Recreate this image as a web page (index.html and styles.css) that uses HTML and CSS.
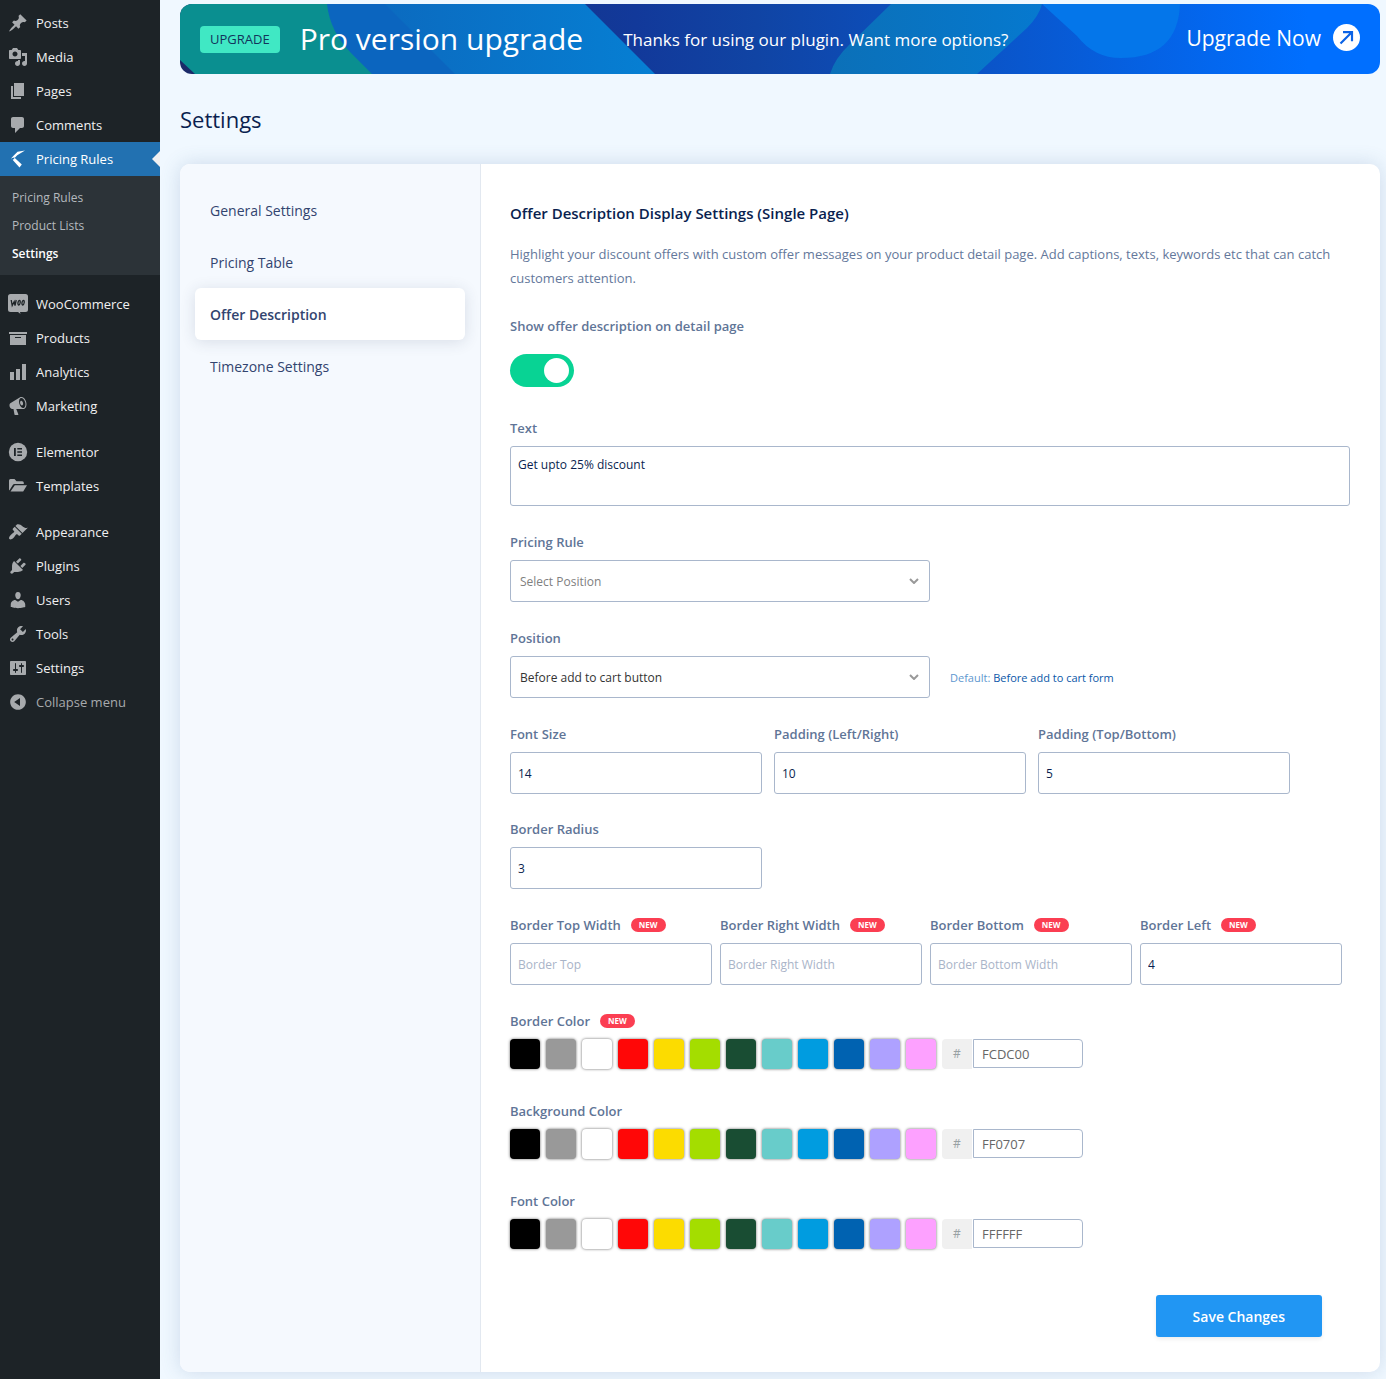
FILE: index.html
```html
<!DOCTYPE html>
<html lang="en">
<head>
<meta charset="utf-8">
<title>Settings</title>
<link rel="stylesheet" href="styles.css">
</head>
<body>
<div class="layout">
  <nav class="menu" aria-label="Main menu">
    <ul class="menu-group">
      <li><a class="menu-link" href="#"><svg class="icon" viewBox="0 0 20 20"><path d="M10.44 3.02l1.82-1.82 6.36 6.35-1.83 1.82c-1.05-.68-2.48-.57-3.41.36l-.75.75c-.92.93-1.04 2.35-.35 3.41l-1.83 1.82-2.41-2.41-2.8 2.79c-.42.42-3.38 2.71-3.8 2.29s1.86-3.39 2.28-3.81l2.79-2.79L4.1 9.36l1.83-1.82c1.05.69 2.48.57 3.4-.36l.75-.75c.93-.92 1.05-2.35.36-3.41z"/></svg>Posts</a></li>
      <li><a class="menu-link" href="#"><svg class="icon" viewBox="0 0 20 20"><path d="M13 11V4c0-.55-.45-1-1-1h-1.67L9 1H5L3.67 3H2c-.55 0-1 .45-1 1v7c0 .55.45 1 1 1h10c.55 0 1-.45 1-1zM7 4.5c1.38 0 2.5 1.12 2.5 2.5S8.38 9.5 7 9.5 4.5 8.38 4.5 7 5.62 4.5 7 4.5zM14 6h5v10.5c0 1.38-1.12 2.5-2.5 2.5S14 17.88 14 16.5s1.12-2.5 2.5-2.5c.17 0 .34.02.5.05V9h-3V6zm-4 8.05V13h2v3.5c0 1.38-1.12 2.5-2.5 2.5S7 17.88 7 16.5 8.12 14 9.5 14c.17 0 .34.02.5.05z"/></svg>Media</a></li>
      <li><a class="menu-link" href="#"><svg class="icon" viewBox="0 0 20 20"><path d="M6 15V2h10v13H6zm-1 1h8v2H3V5h2v11z"/></svg>Pages</a></li>
      <li><a class="menu-link" href="#"><svg class="icon" viewBox="0 0 20 20"><path d="M5 2h9c1.1 0 2 .9 2 2v7c0 1.1-.9 2-2 2h-2l-5 5v-5H5c-1.1 0-2-.9-2-2V4c0-1.1.9-2 2-2z"/></svg>Comments</a></li>
      <li>
        <a class="menu-link menu-link-current" href="#"><svg class="icon" viewBox="0 0 20 20"><path d="M17 1.500L9.500 2.800 6 6.200 3 9.500 4.800 11 9.200 6.200zM3.200 9.200L6.300 8.600 13.800 15.500 11.500 18.500z"/></svg>Pricing Rules</a>
        <ul class="submenu">
          <li><a class="submenu-link" href="#">Pricing Rules</a></li>
          <li><a class="submenu-link" href="#">Product Lists</a></li>
          <li><a class="submenu-link submenu-link-current" href="#">Settings</a></li>
        </ul>
      </li>
    </ul>
    <ul class="menu-group">
      <li><a class="menu-link" href="#"><svg class="icon" viewBox="0 0 20 20"><path d="M2.500 0h15A2.500 2.500 0 0 1 20 2.500v13a2.500 2.500 0 0 1-2.500 2.500H12l.5 2-2.500-2H2.500A2.500 2.500 0 0 1 0 15.500v-13A2.500 2.500 0 0 1 2.500 0z"/><path class="icon-line" d="M3.200 6l1 5.500 2-3.800.8 3.800 1.200-5.500M11.500 6.300c-1.600 0-2.200 4.500-.8 4.700s2.200-4.600.8-4.700zM15.500 6.300c-1.600 0-2.200 4.500-.8 4.700s2.200-4.600.8-4.700z"/></svg>WooCommerce</a></li>
      <li><a class="menu-link" href="#"><svg class="icon" viewBox="0 0 20 20"><path d="M19 4v2H1V4h18zM2 7h16v10H2V7zm11 3V9H7v1h6z"/></svg>Products</a></li>
      <li><a class="menu-link" href="#"><svg class="icon" viewBox="0 0 20 20"><path d="M18 18V2h-4v16h4zm-6 0V7H8v11h4zm-6 0v-8H2v8h4z"/></svg>Analytics</a></li>
      <li><a class="menu-link" href="#"><svg class="icon" viewBox="0 0 20 20"><path d="M18.150 5.940c.46 1.620.38 3.220-.02 4.480-.42 1.280-1.260 2.180-2.300 2.480-.16.060-.26.060-.4.060-.06.020-.12.020-.18.020-.06.020-.14.020-.22.020h-6.800l2.220 5.500c.02.140-.06.260-.14.340-.08.100-.24.160-.34.160H6.950c-.1 0-.26-.06-.34-.16-.08-.08-.16-.2-.14-.34l-1-5.500H4.250l-.02-.02c-.5.060-1.080-.18-1.540-.62s-.88-1.080-1.060-1.880c-.24-.8-.2-1.560-.02-2.200.18-.62.580-1.080 1.060-1.300l.02-.02 9-5.400c.1-.06.180-.1.240-.16.060-.04.140-.08.240-.12.160-.08.280-.12.500-.18 1.040-.3 2.240.1 3.220.98s1.840 2.240 2.260 3.860zm-2.580 5.980h-.02c.4-.1.740-.34 1.040-.7.580-.7.860-1.760.86-3.040 0-.64-.1-1.300-.28-1.980-.34-1.360-1.020-2.500-1.780-3.240s-1.680-1.100-2.460-.88c-.82.220-1.400.96-1.700 2-.32 1.040-.28 2.360.06 3.720.38 1.360 1 2.500 1.800 3.240.78.740 1.620 1.100 2.480.88zm-2.540-7.080c.22-.04.420-.02.620.04.380.160.760.480 1.020 1s.42 1.200.42 1.780c0 .3-.04.560-.12.800-.18.480-.44.840-.86.940-.34.100-.8-.06-1.140-.4s-.64-.86-.78-1.500c-.18-.62-.12-1.240.02-1.720s.48-.84.820-.94z"/></svg>Marketing</a></li>
    </ul>
    <ul class="menu-group">
      <li><a class="menu-link" href="#"><svg class="icon" viewBox="0 0 20 20"><circle cx="10" cy="10" r="9.200"/><path class="icon-cut" d="M6 6h1.800v8H6zM9.300 6H14v1.500H9.300zM9.300 9.200H14v1.500H9.300zM9.300 12.500H14V14H9.300z"/></svg>Elementor</a></li>
      <li><a class="menu-link" href="#"><svg class="icon" viewBox="0 0 20 20"><path d="M1 4.500A1.500 1.500 0 0 1 2.500 3h4l2 2.200h5.800a1.500 1.500 0 0 1 1.500 1.500V8H6.500a2 2 0 0 0-1.700 1L1.300 14.500A2 2 0 0 1 1 13.500zM6.800 9.200H19L15.500 15a1 1 0 0 1-.9.500H2.500z"/></svg>Templates</a></li>
    </ul>
    <ul class="menu-group">
      <li><a class="menu-link" href="#"><svg class="icon" viewBox="0 0 20 20"><path d="M14.480 11.060L7.410 3.990l1.500-1.500c.5-.56 2.300-.47 3.510.32 1.210.8 1.430 1.280 2.910 2.100 1.180.64 2.450 1.260 4.450.85zm-.71.71L6.700 4.700 4.930 6.470c-.39.39-.39 1.020 0 1.410l1.060 1.060c.39.39.39 1.030 0 1.420-.6.600-1.430 1.110-2.210 1.690-.35.260-.7.530-1.010.84C1.430 14.230.4 16.080 1.400 17.070c.99 1 2.840-.03 4.180-1.360.31-.31.580-.66.850-1.020.57-.78 1.080-1.610 1.690-2.210.39-.39 1.020-.39 1.410 0l1.060 1.060c.39.39 1.020.39 1.410 0z"/></svg>Appearance</a></li>
      <li><a class="menu-link" href="#"><svg class="icon" viewBox="0 0 20 20"><path d="M13.110 4.360L9.870 7.600 8 5.730l3.240-3.240c.35-.34 1.050-.2 1.560.32.520.51.660 1.210.31 1.550zm-8 1.770l.91-1.120 9.010 9.010-1.190.84c-.71.71-2.630 1.160-3.820 1.160H6.140L4.900 17.260c-.59.59-1.540.59-2.120 0-.59-.58-.59-1.530 0-2.120l1.240-1.240v-3.880c0-1.130.4-3.190 1.090-3.890zm7.260 3.970l3.240-3.240c.34-.35 1.040-.21 1.550.31.520.51.660 1.210.31 1.550l-3.240 3.250z"/></svg>Plugins</a></li>
      <li><a class="menu-link" href="#"><svg class="icon" viewBox="0 0 20 20"><path d="M10 9.250c-2.270 0-2.730-3.440-2.730-3.440C7 4.020 7.820 2 9.970 2c2.160 0 2.980 2.020 2.710 3.810 0 0-.41 3.440-2.680 3.440zm0 2.570L12.720 10c2.390 0 4.520 2.330 4.520 4.530v2.490s-3.650 1.130-7.240 1.130c-3.650 0-7.240-1.130-7.240-1.130v-2.490c0-2.250 1.940-4.480 4.470-4.480z"/></svg>Users</a></li>
      <li><a class="menu-link" href="#"><svg class="icon" viewBox="0 0 20 20"><path d="M16.680 9.770c-1.340 1.340-3.300 1.670-4.950.99l-5.410 6.520c-.99.99-2.590.99-3.580 0s-.99-2.590 0-3.570l6.520-5.420c-.68-1.650-.35-3.610.99-4.950 1.280-1.280 3.120-1.620 4.720-1.060l-2.890 2.890 2.820 2.820 2.860-2.870c.53 1.580.18 3.390-1.080 4.650zM3.810 16.210c.4.39 1.040.39 1.430 0 .4-.4.4-1.040 0-1.430-.39-.4-1.030-.4-1.430 0-.39.39-.39 1.030 0 1.430z"/></svg>Tools</a></li>
      <li><a class="menu-link" href="#"><svg class="icon" viewBox="0 0 20 20"><path d="M18 16V4c0-.55-.45-1-1-1H3c-.55 0-1 .45-1 1v12c0 .55.45 1 1 1h14c.55 0 1-.45 1-1zM8 11h1c.55 0 1 .45 1 1s-.45 1-1 1H8v1.500c0 .28-.22.5-.5.5s-.5-.22-.5-.5V13H6c-.55 0-1-.45-1-1s.45-1 1-1h1V5.500c0-.28.22-.5.5-.5s.5.22.5.5V11zm5-2h-1c-.55 0-1-.45-1-1s.45-1 1-1h1V5.500c0-.28.22-.5.5-.5s.5.22.5.5V7h1c.55 0 1 .45 1 1s-.45 1-1 1h-1v5.500c0 .28-.22.5-.5.5s-.5-.22-.5-.5V9z"/></svg>Settings</a></li>
      <li><button class="menu-link menu-collapse" type="button"><svg class="icon" viewBox="0 0 20 20"><path d="M10 2.160c4.330 0 7.840 3.510 7.840 7.840s-3.510 7.840-7.840 7.840S2.160 14.330 2.160 10 5.710 2.160 10 2.160zm2 11.720V6.120L6.180 9.970z"/></svg>Collapse menu</button></li>
    </ul>
  </nav>

  <main class="content">
    <section class="banner">
      <svg class="banner-art" viewBox="0 0 1200 70" preserveAspectRatio="none" aria-hidden="true">
        <defs>
          <linearGradient id="base" x1="0" x2="1"><stop offset="0" stop-color="#1b2a68"/><stop offset=".38" stop-color="#12399a"/><stop offset=".48" stop-color="#1044a4"/><stop offset=".65" stop-color="#0b52c4"/><stop offset=".94" stop-color="#006fff"/><stop offset="1" stop-color="#006fff"/></linearGradient>
          <linearGradient id="band" x1="0" x2="1"><stop offset="0" stop-color="#0b6bc0"/><stop offset="1" stop-color="#067fd3"/></linearGradient>
          <linearGradient id="ribbon" x1="0" x2="1"><stop offset="0" stop-color="#0b70b8"/><stop offset="1" stop-color="#0679cf"/></linearGradient>
        </defs>
        <path fill="url(#base)" d="M0 0h1200v70H0z"/>
        <path fill="#0a8f90" d="M0 0h160l40 70H15L0 56z"/>
        <path fill="#0b65bf" d="M147 0h80l60 70h-95L172 50Q150 28 147 0z"/>
        <path fill="url(#band)" d="M205 0h200l70 70H275z"/>
        <path fill="url(#ribbon)" d="M711 0H862Q859 12 847 24L797 70H650Q655 54 670 40z"/>
        <path fill="#0476ea" d="M862 0h138q-2 54-59 54-27 0-44-22z"/>
      </svg>
      <span class="badge">UPGRADE</span>
      <h2 class="banner-title">Pro version upgrade</h2>
      <p class="banner-text">Thanks for using our plugin. Want more options?</p>
      <a class="banner-link" href="#">Upgrade Now
        <svg class="banner-arrow" viewBox="0 0 27 27"><circle cx="13.500" cy="13.500" r="13.500" fill="#fff"/><path d="M7.500 19.500L18.500 8.500M10 8.200h9v9" fill="none" stroke="#0b63e6" stroke-width="2.200"/></svg>
      </a>
    </section>

    <h1 class="page-title">Settings</h1>

    <div class="card">
      <nav class="tabs" aria-label="Settings sections">
        <a class="tab" href="#">General Settings</a>
        <a class="tab" href="#">Pricing Table</a>
        <a class="tab tab-current" href="#">Offer Description</a>
        <a class="tab" href="#">Timezone Settings</a>
      </nav>

      <form class="form">
        <h2 class="form-title">Offer Description Display Settings (Single Page)</h2>
        <p class="form-intro">Highlight your discount offers with custom offer messages on your product detail page. Add captions, texts, keywords etc that can catch customers attention.</p>

        <div class="field field-toggle">
          <label class="label" for="show">Show offer description on detail page</label>
          <input class="toggle" id="show" type="checkbox" checked>
        </div>

        <div class="field">
          <label class="label" for="text">Text</label>
          <textarea class="control control-area" id="text">Get upto 25% discount</textarea>
        </div>

        <div class="field">
          <label class="label" for="rule">Pricing Rule</label>
          <div class="select">
            <select class="control control-select control-empty" id="rule"><option>Select Position</option></select>
            <svg class="chevron" viewBox="0 0 10 6"><path d="M1 1l4 4 4-4"/></svg>
          </div>
        </div>

        <div class="field">
          <label class="label" for="position">Position</label>
          <div class="with-hint">
            <div class="select">
              <select class="control control-select" id="position"><option>Before add to cart button</option></select>
              <svg class="chevron" viewBox="0 0 10 6"><path d="M1 1l4 4 4-4"/></svg>
            </div>
            <span class="hint">Default: <strong class="hint-value">Before add to cart form</strong></span>
          </div>
        </div>

        <div class="row row-thirds">
          <div class="field"><label class="label" for="size">Font Size</label><input class="control" id="size" type="text" value="14"></div>
          <div class="field"><label class="label" for="padx">Padding (Left/Right)</label><input class="control" id="padx" type="text" value="10"></div>
          <div class="field"><label class="label" for="pady">Padding (Top/Bottom)</label><input class="control" id="pady" type="text" value="5"></div>
          <div class="field"><label class="label" for="radius">Border Radius</label><input class="control" id="radius" type="text" value="3"></div>
        </div>

        <div class="row row-quarters">
          <div class="field"><label class="label" for="bt">Border Top Width <span class="new">NEW</span></label><input class="control" id="bt" type="text" placeholder="Border Top"></div>
          <div class="field"><label class="label" for="br">Border Right Width <span class="new">NEW</span></label><input class="control" id="br" type="text" placeholder="Border Right Width"></div>
          <div class="field"><label class="label" for="bb">Border Bottom <span class="new">NEW</span></label><input class="control" id="bb" type="text" placeholder="Border Bottom Width"></div>
          <div class="field"><label class="label" for="bl">Border Left <span class="new">NEW</span></label><input class="control" id="bl" type="text" value="4"></div>
        </div>

        <div class="field field-color">
          <label class="label" for="border-color">Border Color <span class="new">NEW</span></label>
          <div class="picker">
            <button class="swatch black" type="button" aria-label="Black"></button><button class="swatch gray" type="button" aria-label="Gray"></button><button class="swatch white" type="button" aria-label="White"></button><button class="swatch red" type="button" aria-label="Red"></button><button class="swatch yellow" type="button" aria-label="Yellow"></button><button class="swatch lime" type="button" aria-label="Lime"></button><button class="swatch green" type="button" aria-label="Green"></button><button class="swatch aqua" type="button" aria-label="Aqua"></button><button class="swatch sky" type="button" aria-label="Sky"></button><button class="swatch blue" type="button" aria-label="Blue"></button><button class="swatch violet" type="button" aria-label="Violet"></button><button class="swatch pink" type="button" aria-label="Pink"></button>
            <div class="hex"><span class="hex-mark">#</span><input class="hex-input" id="border-color" type="text" value="FCDC00"></div>
          </div>
        </div>

        <div class="field field-color">
          <label class="label" for="background-color">Background Color</label>
          <div class="picker">
            <button class="swatch black" type="button" aria-label="Black"></button><button class="swatch gray" type="button" aria-label="Gray"></button><button class="swatch white" type="button" aria-label="White"></button><button class="swatch red" type="button" aria-label="Red"></button><button class="swatch yellow" type="button" aria-label="Yellow"></button><button class="swatch lime" type="button" aria-label="Lime"></button><button class="swatch green" type="button" aria-label="Green"></button><button class="swatch aqua" type="button" aria-label="Aqua"></button><button class="swatch sky" type="button" aria-label="Sky"></button><button class="swatch blue" type="button" aria-label="Blue"></button><button class="swatch violet" type="button" aria-label="Violet"></button><button class="swatch pink" type="button" aria-label="Pink"></button>
            <div class="hex"><span class="hex-mark">#</span><input class="hex-input" id="background-color" type="text" value="FF0707"></div>
          </div>
        </div>

        <div class="field field-color">
          <label class="label" for="font-color">Font Color</label>
          <div class="picker">
            <button class="swatch black" type="button" aria-label="Black"></button><button class="swatch gray" type="button" aria-label="Gray"></button><button class="swatch white" type="button" aria-label="White"></button><button class="swatch red" type="button" aria-label="Red"></button><button class="swatch yellow" type="button" aria-label="Yellow"></button><button class="swatch lime" type="button" aria-label="Lime"></button><button class="swatch green" type="button" aria-label="Green"></button><button class="swatch aqua" type="button" aria-label="Aqua"></button><button class="swatch sky" type="button" aria-label="Sky"></button><button class="swatch blue" type="button" aria-label="Blue"></button><button class="swatch violet" type="button" aria-label="Violet"></button><button class="swatch pink" type="button" aria-label="Pink"></button>
            <div class="hex"><span class="hex-mark">#</span><input class="hex-input" id="font-color" type="text" value="FFFFFF"></div>
          </div>
        </div>

        <div class="actions"><button class="save" type="submit">Save Changes</button></div>
      </form>
    </div>
  </main>
</div>
</body>
</html>
```
FILE: styles.css
```css
* {
  box-sizing: border-box;
}

body {
  margin: 0;
  background: #f0f8ff;
  color: #0a1f4f;
  font-family: "Segoe UI", "Open Sans", "Noto Sans", sans-serif;
  font-size: 13px;
}

h1, h2, p, ul {
  margin: 0;
  padding: 0;
  font-weight: 400;
}

ul {
  list-style: none;
}

a {
  text-decoration: none;
}

button, input, select, textarea {
  font: inherit;
}

.layout {
  display: flex;
  min-height: 100vh;
}

/* Side menu */
.menu {
  display: flex;
  flex-direction: column;
  gap: 12px;
  flex: none;
  width: 160px;
  padding-top: 6px;
  background: #1d2327;
}

.menu-link {
  position: relative;
  display: flex;
  align-items: center;
  gap: 8px;
  width: 100%;
  height: 34px;
  padding: 0 8px;
  border: 0;
  background: none;
  color: #f0f0f1;
}

.icon {
  flex: none;
  width: 20px;
  height: 20px;
  fill: #a7aaad;
}

.icon-line {
  fill: none;
  stroke: #1d2327;
  stroke-width: 1.3;
}

.icon-cut {
  fill: #1d2327;
}

.menu-link-current {
  background: #2271b1;
  color: #fff;
}

.menu-link-current .icon {
  fill: #fff;
}

.menu-link-current::after {
  content: "";
  position: absolute;
  top: 9px;
  right: 0;
  border: 8px solid transparent;
  border-left: 0;
  border-right-color: #f0f0f1;
}

.menu-collapse {
  color: #a7aaad;
}

.submenu {
  padding: 8px 12px 7px;
  background: #2c3338;
}

.submenu-link {
  display: block;
  color: #b4b9be;
  font-size: 12px;
  line-height: 28px;
}

.submenu-link-current {
  color: #fff;
  font-weight: 600;
}

/* Upgrade banner */
.content {
  flex: 1;
  min-width: 0;
  padding: 4px 6px 7px 20px;
}

.banner {
  position: relative;
  z-index: 0;
  display: flex;
  align-items: center;
  height: 70px;
  padding: 0 20px;
  border-radius: 12px;
  overflow: hidden;
  color: #fff;
}

.banner-art {
  position: absolute;
  inset: 0;
  z-index: -1;
  width: 100%;
  height: 100%;
}

.badge {
  padding: 0 10px;
  border-radius: 4px;
  background: #40e8c4;
  color: #12345c;
  font-size: 13px;
  line-height: 27px;
}

.banner-title {
  margin-left: 20px;
  font-size: 30px;
  line-height: 40px;
}

.banner-text {
  margin-left: 40px;
  font-size: 17px;
}

.banner-link {
  display: flex;
  align-items: center;
  gap: 12px;
  margin-left: auto;
  padding-bottom: 3px;
  color: #fff;
  font-size: 21px;
}

.banner-arrow {
  width: 27px;
  height: 27px;
}

.page-title {
  padding: 30px 0;
  font-size: 22px;
  line-height: 30px;
}

/* Settings card */
.card {
  display: flex;
  border-radius: 10px;
  background: #fff;
  box-shadow: 0 0 20px rgba(60, 100, 150, .2);
}

.tabs {
  flex: none;
  width: 301px;
  padding: 20px 15px;
  border-right: 1px solid #e2e8f0;
  border-radius: 10px 0 0 10px;
  background: #f5f9fe;
}

.tab {
  display: block;
  padding: 2px 15px 0;
  border-radius: 6px;
  color: #32446f;
  font-size: 14px;
  line-height: 50px;
}

.tab-current {
  background: #fff;
  box-shadow: 0 2px 15px rgba(40, 60, 90, .14);
  font-weight: 600;
}

.form {
  flex: 1;
  min-width: 0;
  padding: 37px 30px 35px 29px;
}

.form-title {
  font-size: 15px;
  font-weight: 600;
  line-height: 24px;
}

.form-intro {
  margin: 17px 0 26px;
  color: #64789b;
  font-size: 13px;
  line-height: 24px;
}

.field {
  display: flex;
  flex-direction: column;
  gap: 8px;
  margin-bottom: 26px;
}

.field-toggle {
  gap: 18px;
  margin-bottom: 31px;
}

.label {
  display: flex;
  align-items: center;
  gap: 10px;
  color: #5f7597;
  font-size: 13px;
  font-weight: 600;
  line-height: 20px;
}

.toggle {
  appearance: none;
  display: flex;
  justify-content: flex-end;
  width: 64px;
  height: 33px;
  margin: 0;
  padding: 4px 5px;
  border-radius: 17px;
  background: #08d394;
}

.toggle::before {
  content: "";
  width: 25px;
  height: 25px;
  border-radius: 50%;
  background: #fff;
}

.toggle:not(:checked) {
  justify-content: flex-start;
  background: #b4c0d0;
}

.control {
  width: 100%;
  height: 42px;
  padding: 0 7px;
  border: 1px solid #a9b7cc;
  border-radius: 3px;
  background: #fff;
  color: #0a1f4f;
  font-size: 12px;
}

.control::placeholder {
  color: #a9b4c8;
}

.control-area {
  height: 60px;
  padding: 8px 7px;
  line-height: 20px;
  resize: none;
}

.select {
  display: grid;
  align-items: center;
  width: 50%;
}

.control-select {
  grid-area: 1 / 1;
  appearance: none;
  padding: 0 9px;
  color: #333;
}

.control-empty {
  color: #808080;
}

.chevron {
  grid-area: 1 / 1;
  justify-self: end;
  width: 10px;
  height: 6px;
  margin-right: 11px;
  fill: none;
  stroke: #999;
  stroke-width: 2;
  pointer-events: none;
}

.with-hint {
  display: flex;
  align-items: center;
  gap: 20px;
}

.hint {
  color: #5e97cf;
  font-size: 11px;
}

.hint-value {
  color: #0a57a8;
  font-weight: 400;
}

.row {
  display: grid;
}

.row-thirds {
  grid-template-columns: repeat(3, 30%);
  gap: 25px 12px;
  margin-bottom: 26px;
}

.row-thirds .field {
  margin-bottom: 0;
}

.row-quarters {
  grid-template-columns: repeat(4, 1fr);
  column-gap: 8px;
  padding-right: 8px;
}

.new {
  padding: 0 8px;
  border-radius: 7px;
  background: #fb3e52;
  color: #fff;
  font-size: 8px;
  font-weight: 700;
  line-height: 14px;
}

/* Colour pickers */
.field-color {
  margin-bottom: 32px;
}

.picker {
  display: flex;
  flex-wrap: wrap;
  gap: 6px;
}

.swatch {
  width: 30px;
  height: 30px;
  padding: 0;
  border: 0;
  border-radius: 4px;
  box-shadow: 0 0 3px rgba(0, 0, 0, .6);
}

.black { background: #000; }
.gray { background: #999; }
.white { background: #fff; }
.red { background: #ff0707; }
.yellow { background: #fcdc00; }
.lime { background: #a4dd00; }
.green { background: #194d33; }
.aqua { background: #68ccca; }
.sky { background: #009ce0; }
.blue { background: #0062b1; }
.violet { background: #aea1ff; }
.pink { background: #fda1ff; }

.hex {
  display: flex;
  gap: 1px;
}

.hex-mark {
  width: 30px;
  border-radius: 4px 0 0 4px;
  background: #f0f0f0;
  color: #98a1a4;
  font-size: 12px;
  line-height: 30px;
  text-align: center;
}

.hex-input {
  width: 110px;
  height: 29px;
  padding: 0 8px;
  border: 1px solid #a9b7cc;
  border-radius: 0 4px 4px 0;
  background: #fff;
  color: #666;
  font-size: 13px;
}

.actions {
  display: flex;
  justify-content: flex-end;
  padding: 14px 28px 0 0;
}

.save {
  height: 42px;
  padding: 0 37px;
  border: 0;
  border-radius: 3px;
  background: #2196f3;
  box-shadow: 0 2px 4px rgba(0, 0, 0, .08);
  color: #fff;
  font-size: 14px;
  font-weight: 600;
}
```
